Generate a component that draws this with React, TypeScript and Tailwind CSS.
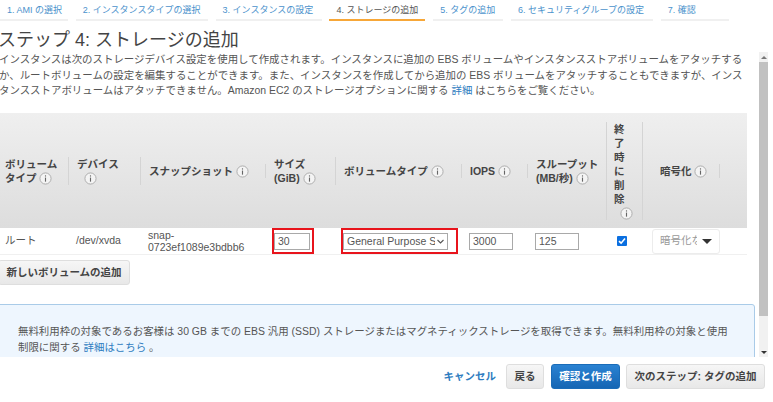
import React from 'react'

const FONT = '[font-family:"Liberation_Sans","Noto_Sans_CJK_JP",sans-serif]'

const tabs = [
  { label: '1. AMI の選択', width: 'w-[68px]' },
  { label: '2. インスタンスタイプの選択', width: 'w-[132px]' },
  { label: '3. インスタンスの設定', width: 'w-[106px]' },
  { label: '4. ストレージの追加', width: 'w-[96px]', active: true },
  { label: '5. タグの追加', width: 'w-[70px]' },
  { label: '6. セキュリティグループの設定', width: 'w-[142px]' },
  { label: '7. 確認', width: 'w-[68px]' },
]

// small circled "i" used next to the column titles
const InfoIcon = () => (
  <svg width="13" height="13" viewBox="0 0 14 14" className="inline-block align-[-3px]">
    <circle cx="7" cy="7" r="6" fill="#f4f4f4" stroke="#aaaaaa" strokeWidth="1" />
    <rect x="6.4" y="6" width="1.2" height="4.4" fill="#666666" />
    <rect x="6.4" y="3.6" width="1.2" height="1.3" fill="#666666" />
  </svg>
)

const HeaderCell = ({ children, last }: { children: React.ReactNode; last?: boolean }) => (
  <th className="p-0 align-middle text-left font-bold">
    <div className={`flex items-center pl-[5px] leading-[14px] whitespace-nowrap ${last ? '' : 'border-r border-[#d4d4d4]'}`}>
      <div>{children}</div>
    </div>
  </th>
)

const NumberInput = ({ value, width }: { value: string; width: string }) => (
  <div className={`${width} h-[17px] border border-[#a9a9a9] bg-white pl-[3px] text-[10.5px] leading-[15px] text-[#555]`}>
    {value}
  </div>
)

export default function App() {
  return (
    <div className={`flex h-[402px] w-[773px] flex-col overflow-hidden bg-white text-[#444] ${FONT}`}>
      {/* wizard steps */}
      <div className="flex h-[21px] shrink-0 gap-[7.8px] text-[9px]">
        {tabs.map((t) => (
          <div
            key={t.label}
            className={`${t.width} h-[21px] shrink-0 border-b-[2px] pt-[3px] pl-[7px] leading-[14px] whitespace-nowrap ${
              t.active ? 'border-[#f7a738] text-[#555]' : 'border-[#f0f0f0] text-[#4b92cc]'
            }`}
          >
            {t.label}
          </div>
        ))}
      </div>

      <h1 className="mt-[7px] -ml-[2px] h-[24px] shrink-0 text-[18px] leading-[24px] font-normal whitespace-nowrap text-[#444]">
        ステップ 4: ストレージの追加
      </h1>

      <div className="flex min-h-0 flex-1">
        {/* scrolling body */}
        <div className="w-[759px] shrink-0 overflow-hidden">
          <p className="-ml-[1px] text-[10.45px] leading-[15.7px] whitespace-nowrap text-[#555]">
            インスタンスは次のストレージデバイス設定を使用して作成されます。インスタンスに追加の EBS ボリュームやインスタンスストアボリュームをアタッチする
            <br />
            か、ルートボリュームの設定を編集することができます。また、インスタンスを作成してから追加の EBS ボリュームをアタッチすることもできますが、インス
            <br />
            タンスストアボリュームはアタッチできません。Amazon EC2 のストレージオプションに関する{' '}
            <span className="text-[#2d7cc0]">詳細</span> はこちらをご覧ください。
          </p>

          <table className="mt-[14px] w-[747px] table-fixed border-collapse text-[10.5px] text-[#444]">
            <colgroup>
              <col className="w-[69px]" />
              <col className="w-[72px]" />
              <col className="w-[125px]" />
              <col className="w-[70px]" />
              <col className="w-[126px]" />
              <col className="w-[66px]" />
              <col className="w-[78px]" />
              <col className="w-[37px]" />
              <col className="w-[77px]" />
              <col />
            </colgroup>
            <thead>
              <tr className="h-[115px] bg-gradient-to-b from-[#efefef] to-[#dddddd]">
                <HeaderCell>
                  ボリューム
                  <br />
                  タイプ <InfoIcon />
                </HeaderCell>
                <HeaderCell>
                  <span className="pl-[3px]">デバイス</span>
                  <br />
                  <span className="pl-[10px]">
                    <InfoIcon />
                  </span>
                </HeaderCell>
                <HeaderCell>
                  <span className="pl-[3px]">
                    スナップショット <InfoIcon />
                  </span>
                </HeaderCell>
                <HeaderCell>
                  <span className="pl-[3px]">サイズ</span>
                  <br />
                  <span className="pl-[3px]">
                    (GiB) <InfoIcon />
                  </span>
                </HeaderCell>
                <HeaderCell>
                  <span className="pl-[3px]">
                    ボリュームタイプ <InfoIcon />
                  </span>
                </HeaderCell>
                <HeaderCell>
                  <span className="pl-[3px]">
                    IOPS <InfoIcon />
                  </span>
                </HeaderCell>
                <HeaderCell last>
                  <span className="pl-[3px]">スループット</span>
                  <br />
                  <span className="pl-[3px]">
                    (MB/秒) <InfoIcon />
                  </span>
                </HeaderCell>
                <th className="p-0 align-middle text-left font-bold">
                  <div className="border-x border-[#d4d4d4] pl-[7px] leading-[14px]">
                    終<br />了<br />時<br />に<br />削<br />除<br />
                    <span className="pl-[6px]">
                      <InfoIcon />
                    </span>
                  </div>
                </th>
                <HeaderCell>
                  <span className="pl-[12px]">
                    暗号化 <InfoIcon />
                  </span>
                </HeaderCell>
                <th className="p-0" />
              </tr>
            </thead>
            <tbody>
              <tr className="h-[26px] border-b border-[#f0f0f0] text-[10.5px] text-[#555]">
                <td className="pl-[5px]">ルート</td>
                <td className="pl-[7px]">/dev/xvda</td>
                <td className="pl-[7px] leading-[12px]">
                  snap-
                  <br />
                  0723ef1089e3bdbb6
                </td>
                <td className="pl-[6px]">
                  <div className="flex h-[26px] w-[42px] items-center border-2 border-[#e8141c]">
                    <NumberInput value="30" width="w-[36px]" />
                  </div>
                </td>
                <td className="pl-[5px]">
                  <div className="flex h-[26px] w-[117px] items-center border-2 border-[#e8141c]">
                    <div className="flex h-[17px] w-[105px] items-center justify-between overflow-hidden border border-[#a9a9a9] pl-[3px] pr-[2px] text-[10.5px] leading-[15px] whitespace-nowrap">
                      <span className="w-[88px] overflow-hidden">General Purpose SSD</span>
                      <svg width="9" height="9" viewBox="0 0 9 9" fill="none" stroke="#555" strokeWidth="1.1">
                        <path d="M1.5 3 L4.5 6 L7.5 3" />
                      </svg>
                    </div>
                  </div>
                </td>
                <td className="pl-[7px]">
                  <NumberInput value="3000" width="w-[44px]" />
                </td>
                <td className="pl-[7px]">
                  <NumberInput value="125" width="w-[44px]" />
                </td>
                <td className="pl-[11px]">
                  <div className="flex h-[10px] w-[10px] items-center justify-center rounded-[1px] bg-[#0b6fe0]">
                    <svg width="8" height="8" viewBox="0 0 8 8" fill="none" stroke="#fff" strokeWidth="1.6">
                      <path d="M1 4.2 L3.1 6.2 L7 1.6" />
                    </svg>
                  </div>
                </td>
                <td className="pl-[9px]">
                  <div className="flex h-[25px] w-[68px] items-center justify-between rounded-[3px] border border-[#ececec] pl-[7px] pr-[7px] text-[10.5px] text-[#999]">
                    <span className="w-[37px] overflow-hidden whitespace-nowrap">暗号化なし</span>
                    <span className="h-0 w-0 border-x-[5px] border-t-[5px] border-x-transparent border-t-[#333]" />
                  </div>
                </td>
                <td />
              </tr>
            </tbody>
          </table>

          <button className="mt-[5px] -ml-[2px] h-[25px] w-[132px] rounded-[3px] border border-[#dedede] bg-gradient-to-b from-[#f6f6f6] to-[#e8e8e8] text-[10.5px] font-bold text-[#444]">
            新しいボリュームの追加
          </button>

          <div className="mt-[19px] -ml-[4px] w-[759px] rounded-[3px] border border-[#a9cbe8] bg-[#eef6fe] pt-[19px] pl-[21px] pb-[20px] text-[10.45px] leading-[15.5px] whitespace-nowrap text-[#555]">
            無料利用枠の対象であるお客様は 30 GB までの EBS 汎用 (SSD) ストレージまたはマグネティックストレージを取得できます。無料利用枠の対象と使用
            <br />
            制限に関する <span className="text-[#2d7cc0]">詳細はこちら</span> 。
          </div>
        </div>

        {/* scrollbar */}
        <div className="flex w-[9px] shrink-0 flex-col bg-[#f1f1f1]">
          <div className="flex h-[10px] shrink-0 items-center justify-center">
            <span className="h-0 w-0 border-x-[3px] border-b-[3px] border-x-transparent border-b-[#777]" />
          </div>
          <div className="h-[254px] shrink-0 bg-[#c1c1c1]" />
          <div className="flex-1" />
          <div className="flex h-[10px] shrink-0 items-center justify-center">
            <span className="h-0 w-0 border-x-[3px] border-t-[3px] border-x-transparent border-t-[#333]" />
          </div>
        </div>
      </div>

      {/* footer actions */}
      <div className="flex h-[45px] shrink-0 items-start justify-end pt-[7px] pr-[8px] text-[10.5px] font-bold">
        <span className="mt-[5px] mr-[10px] text-[#2d7cc0]">キャンセル</span>
        <button className="mr-[7px] h-[25px] w-[38px] rounded-[3px] border border-[#dedede] bg-gradient-to-b from-[#f6f6f6] to-[#e8e8e8] text-[#444]">
          戻る
        </button>
        <button className="mr-[6px] h-[25px] w-[69px] rounded-[3px] border border-[#1a6cb8] bg-gradient-to-b from-[#2a82d2] to-[#1566b4] text-white">
          確認と作成
        </button>
        <button className="h-[25px] w-[139px] rounded-[3px] border border-[#dedede] bg-gradient-to-b from-[#f6f6f6] to-[#e8e8e8] text-[#444]">
          次のステップ: タグの追加
        </button>
      </div>
    </div>
  )
}
